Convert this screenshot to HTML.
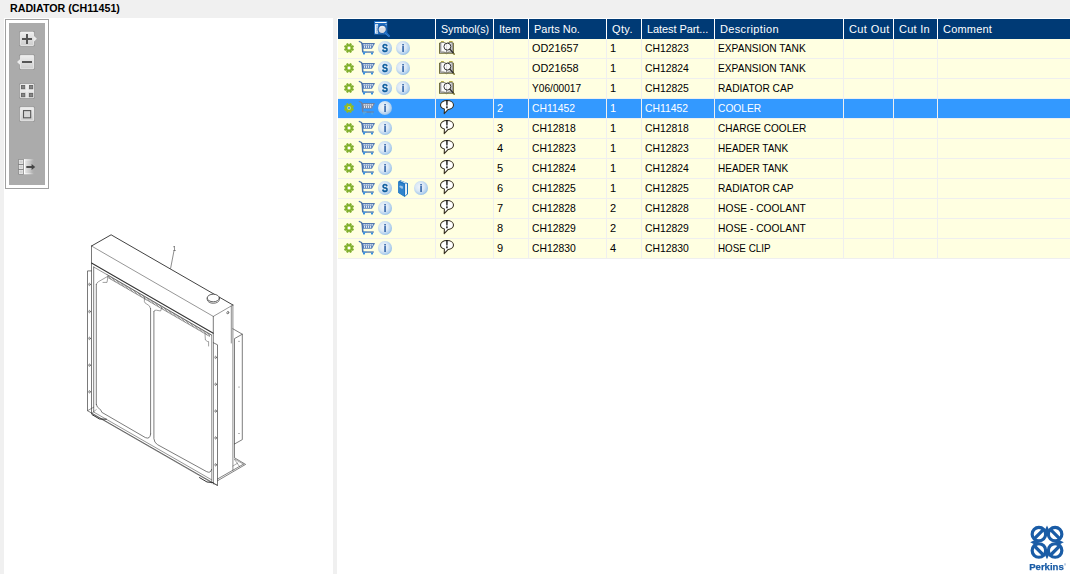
<!DOCTYPE html>
<html lang="en">
<head>
<meta charset="utf-8">
<title>RADIATOR (CH11451)</title>
<style>
*{box-sizing:border-box;margin:0;padding:0}
html,body{width:1070px;height:574px;overflow:hidden;background:#f0f0f0;font-family:"Liberation Sans",sans-serif;font-size:11px;color:#000}
#title{position:absolute;left:10.4px;top:0;height:16px;line-height:16px;font-weight:bold;font-size:11px;white-space:nowrap;transform:scaleX(.97);transform-origin:0 0}
#left{position:absolute;left:4px;top:18px;width:329px;height:556px;background:#fff;overflow:hidden}
#right{position:absolute;left:337px;top:18px;width:733px;height:556px;background:#fff;overflow:hidden}
#tools{position:absolute;left:1px;top:1px;width:44px;height:170px;border:1px solid #a0a0a0;padding:3px;background:#fff}
#tools .in{width:100%;height:100%;background:#ababab;position:relative}
#tools svg{position:absolute;display:block}
#draw{position:absolute;left:0;top:0}
table{position:absolute;left:1px;top:1px;width:732px;border-collapse:separate;border-spacing:0;table-layout:fixed}
th,td{height:20px;padding:0;white-space:nowrap;overflow:hidden;text-align:left;font-weight:normal;font-size:11px;vertical-align:top}
th{background:#003a75;color:#fff;border-right:1px solid #fff;line-height:19px;padding:1px 0 0 5px;position:relative}
th:last-child,td:last-child{border-right:0}
td{background:#ffffe1;border-right:1px solid #efefef;border-bottom:1px solid #efefef;line-height:18px;padding-left:3px}
td.c0{padding-left:0}
tr.sel td{background:#3399ff;color:#fff}
.t{display:inline-block;transform-origin:0 50%}
.ic{position:relative;height:19px}
.ic svg{position:absolute;top:1px;display:block;overflow:visible;will-change:transform}
#logo{position:absolute;left:1029px;top:524px}
</style>
</head>
<body>
<div id="title">RADIATOR (CH11451)</div>
<div id="left">
<svg id="draw" style="will-change:transform" width="329" height="556" viewBox="4 18 329 556" fill="none" stroke="#404040" stroke-width="0.68" stroke-linecap="round" stroke-linejoin="round">
<!-- top tank -->
<path d="M91.5 246 L111.1 234.8 L232.9 305" stroke="#383838" stroke-width="0.95"/>
<path d="M91.5 246 L213.3 316.4 L232.9 305" stroke-width="0.55"/>
<path d="M91.5 246 V413.4" stroke="#404040" stroke-width="0.7"/>
<path d="M91.5 263 L213.3 333.3" stroke="#343434" stroke-width="1.05"/>
<path d="M93.7 267 L211.6 335.1" stroke-width="0.55"/>
<path d="M213.3 316.4 V484" stroke-width="0.7"/>
<path d="M232.9 305 V470.2 M231.3 306 V343" stroke-width="0.6"/>
<!-- cap -->
<path d="M207.2 298 V299.4 A6.1 3.9 0 0 0 219.4 299.4 V298" stroke="#3a3a3a" stroke-width="0.7"/>
<ellipse cx="213.3" cy="298" rx="6.1" ry="3.8" fill="#fff" stroke="#3a3a3a" stroke-width="0.8"/>
<ellipse cx="227.8" cy="312.6" rx="0.9" ry="1.3" stroke-width="0.6" transform="rotate(25 227.8 312.6)"/>
<!-- leader -->
<path d="M173.9 251.2 L170.6 268.4" stroke-width="0.6"/>
<!-- hatch band under tank -->
<path d="M108 276.6 L210.4 335.7" stroke="#606060" stroke-width="2" stroke-dasharray="0.55 0.95" stroke-linecap="butt"/>
<path d="M107 274.6 L211 334.7 M108.6 278 L209.6 336.4" stroke-width="0.45"/>
<!-- left flange -->
<path d="M91.5 270.9 H87.5 V410.7 L217.5 485.4" stroke-width="0.7"/>
<path d="M93.7 267 V412 M96.3 284.5 V404.4"/>
<path d="M96.3 284.5 Q96.5 282.6 98.6 281.6 L108 276.2 L107 282.4 L103 282.4" stroke-width="0.5"/>
<path d="M96.3 404.4 Q96.8 407.4 99.4 408.8 Q101.4 410 101.8 412.3 L145.4 437.6 Q150.2 439.6 150.6 434"/>
<g stroke-width="0.55"><ellipse cx="89.5" cy="284.4" rx="0.8" ry="1.2"/><ellipse cx="89.5" cy="311.6" rx="0.8" ry="1.2"/><ellipse cx="89.5" cy="338.4" rx="0.8" ry="1.2"/><ellipse cx="89.5" cy="365.2" rx="0.8" ry="1.2"/><ellipse cx="89.5" cy="391.8" rx="0.8" ry="1.2"/></g>
<!-- bottom rail -->
<path d="M91.5 413.4 L211.6 482.6 M94 412.2 L211.6 479.8 M87.5 410.7 L93.7 407.2" stroke-width="0.55"/>
<path d="M91.5 413.4 L96.3 409.6" stroke-width="0.45"/>
<path d="M92 414.6 L99.5 419 L106.4 419.2" stroke="#333" stroke-width="1"/>
<path d="M199.5 477.6 L207 482 L213 482.6" stroke="#333" stroke-width="1"/>
<!-- centre divider -->
<path d="M150.6 308.6 V434 M153.9 311.6 V438.6 Q154.2 442.8 157.6 444.7 L206.4 471.5 Q210.8 473.8 211.6 469.4"/>
<path d="M144.4 297.6 V301.6 Q144.8 303.4 147 304.2 Q150.2 305.4 150.6 308.6 M153.9 311.6 Q154.2 309.6 156.4 310.2 L160.6 311 L161.8 307.6" stroke-width="0.5"/>
<!-- right inner/flange -->
<path d="M211.6 335.1 V483 M205 334 L205.4 340 Q207.6 342 208.6 341.6 L208.6 346" stroke-width="0.5"/>
<path d="M213.3 342.7 L217.5 344.8 V485.4 L213.3 483.4" stroke-width="0.7"/>
<g stroke-width="0.55"><ellipse cx="215.6" cy="357.4" rx="0.8" ry="1.2"/><ellipse cx="215.6" cy="384.3" rx="0.8" ry="1.2"/><ellipse cx="215.6" cy="411.1" rx="0.8" ry="1.2"/><ellipse cx="215.6" cy="437.9" rx="0.8" ry="1.2"/><ellipse cx="215.6" cy="464.8" rx="0.8" ry="1.2"/></g>
<!-- rear bracket -->
<path d="M232.9 328.8 L242.3 334.2 V439.6 L234.5 444 M242.3 334.2 L234.5 338.6 V443.6"/>
<g fill="#555" stroke="none"><circle cx="239" cy="341.3" r="0.55"/><circle cx="239" cy="387" r="0.55"/><circle cx="239" cy="433.5" r="0.55"/></g>
<!-- foot -->
<path d="M217.5 480.8 L245.6 464.4 L234.5 457.8 V444 M217.5 479 L243.4 464.2" stroke-width="0.65"/>
<path d="M243.4 464.2 L234.5 459 M234.5 459.4 L239.4 466.4 M232.9 466 L237.8 463" stroke-width="0.45"/>
<text x="172.6" y="250.6" font-family="Liberation Sans, sans-serif" font-size="6.8" fill="#555" stroke="none">1</text>
</svg>

<div id="tools"><div class="in"><svg width="36" height="162" viewBox="9 23 36 162" style="left:0;top:0">
<linearGradient id="bg1" x1="0" y1="0" x2="0" y2="1"><stop offset="0" stop-color="#efefef"/><stop offset="0.5" stop-color="#dedede"/><stop offset="1" stop-color="#cdcdcd"/></linearGradient>
<linearGradient id="bg2" x1="0" y1="0" x2="1" y2="0"><stop offset="0" stop-color="#ececec"/><stop offset="0.55" stop-color="#cfcfcf" stop-opacity=".8"/><stop offset="1" stop-color="#ababab" stop-opacity="0"/></linearGradient>
<linearGradient id="bg3" x1="0" y1="0" x2="1" y2="0"><stop offset="0" stop-color="#ffffff"/><stop offset="0.6" stop-color="#ffffff" stop-opacity=".5"/><stop offset="1" stop-color="#ffffff" stop-opacity="0"/></linearGradient>
<!-- plus -->
<rect x="19.35" y="31.05" width="15.3" height="15.3" rx="1.2" fill="#868686" opacity=".85"/>
<path d="M34 36 L36.9 38.8 L34 41.6 Z" fill="#ececec"/>
<rect x="20.3" y="32.00" width="13.4" height="13.4" rx="0.6" fill="url(#bg1)" stroke="#f6f6f6" stroke-width="0.8"/>
<path d="M22 39 H32 M27 34 V44" stroke="#555" stroke-width="2" fill="none"/>
<!-- minus -->
<rect x="19.35" y="54.45" width="15.3" height="15.3" rx="1.2" fill="#868686" opacity=".85"/>
<path d="M20 59.2 L17 62 L20 64.8 Z" fill="#ececec"/>
<rect x="20.3" y="55.40" width="13.4" height="13.4" rx="0.6" fill="url(#bg1)" stroke="#f6f6f6" stroke-width="0.8"/>
<path d="M22 62 H32" stroke="#555" stroke-width="2" fill="none"/>
<!-- grid -->
<rect x="19.35" y="83.35" width="15.3" height="15.3" rx="1.2" fill="#868686" opacity=".85"/>
<rect x="20.3" y="84.30" width="13.4" height="13.4" rx="0.6" fill="url(#bg1)" stroke="#f6f6f6" stroke-width="0.8"/>
<path d="M27 84.5 V97.5 M20.5 91 H33.5" stroke="#f3f3f3" stroke-width="1.6" opacity=".7"/>
<g fill="#858585" stroke="#666" stroke-width="0.9"><rect x="21.5" y="85.5" width="3.2" height="3.2"/><rect x="29.5" y="85.5" width="3.2" height="3.2"/><rect x="21.5" y="93.5" width="3.2" height="3.2"/><rect x="29.5" y="93.5" width="3.2" height="3.2"/></g>
<!-- square -->
<rect x="19.35" y="106.45" width="15.3" height="15.3" rx="1.2" fill="#868686" opacity=".85"/>
<rect x="20.3" y="107.40" width="13.4" height="13.4" rx="0.6" fill="url(#bg1)" stroke="#f6f6f6" stroke-width="0.8"/>
<rect x="23.5" y="110.6" width="7.2" height="7.2" fill="#d6d6d6" stroke="#555" stroke-width="1.1"/>
<!-- arrow panel -->
<rect x="24" y="159.6" width="11" height="14.4" fill="url(#bg2)"/>
<path d="M24.5 159.6 V174" stroke="#fff" stroke-width="1.2"/>
<rect x="24" y="159.3" width="10" height="1" fill="url(#bg3)"/>
<rect x="24" y="173.3" width="10" height="1" fill="url(#bg3)"/>
<rect x="18.3" y="159.4" width="5.3" height="14.9" fill="#6f6f6f"/>
<g fill="#d2d2d2" stroke="#f2f2f2" stroke-width="0.8"><rect x="19.2" y="160.2" width="3.6" height="3.4"/><rect x="19.2" y="165.2" width="3.6" height="3.4"/><rect x="19.2" y="170.2" width="3.6" height="3.4"/></g>
<path d="M26.3 167 H32.5" stroke="#444" stroke-width="1.9"/>
<path d="M31.6 163.9 L35.2 167 L31.6 170.1 Z" fill="#444"/>
</svg>
</div></div>
</div>
<div id="right">
<table>
<colgroup><col style="width:98px"><col style="width:58px"><col style="width:35px"><col style="width:78px"><col style="width:35px"><col style="width:73px"><col style="width:129px"><col style="width:50px"><col style="width:44px"><col style="width:132px"></colgroup>
<thead><tr><th><svg width="18" height="17" viewBox="0 0 18 17" style="position:absolute;left:36px;top:2px"><rect x="0" y="0" width="13.3" height="13.5" fill="#1f6cc0"/><rect x="1.1" y="1" width="11.4" height="1" fill="#fff"/><rect x="1.1" y="3.2" width="3" height="9.4" fill="#fff"/><rect x="2.2" y="4.6" width="1.6" height="0.9" fill="#1d64b4"/><rect x="2.2" y="6.6" width="1.6" height="0.9" fill="#1d64b4"/><rect x="2.2" y="8.6" width="1.6" height="0.9" fill="#1d64b4"/><rect x="2.2" y="10.6" width="1.6" height="0.9" fill="#1d64b4"/><path d="M11.2 3.2 L12.5 3.2 L12.5 4.6 Z" fill="#fff"/><circle cx="8.2" cy="8.3" r="4.15" fill="#d9dde4" stroke="#195aa6" stroke-width="1.1"/><path d="M6 6.6 Q8 5 10.4 6.4" stroke="#f4f6f9" stroke-width="1.2" fill="none"/><path d="M11.4 11.6 L15 15" stroke="#1f6fc4" stroke-width="2.2" stroke-linecap="round"/><path d="M11.6 12.6 L14.2 15.2" stroke="#8fb8e6" stroke-width="0.6" stroke-dasharray="0.8 0.8"/></svg></th><th><span class="t" style="transform:scaleX(.97)">Symbol(s)</span></th><th>Item</th><th>Parts No.</th><th style="letter-spacing:.37px">Qty.</th><th style="letter-spacing:-.09px">Latest Part...</th><th style="letter-spacing:.35px">Description</th><th style="letter-spacing:.39px">Cut Out</th><th style="letter-spacing:.25px">Cut In</th><th style="letter-spacing:.2px">Comment</th></tr></thead>
<tbody>
<tr><td class="c0"><div class="ic"><svg width="16" height="16" viewBox="0 0 16 16" style="left:3px"><path d="M11.46 8.52 L12.62 9.11 L12.05 10.48 L10.82 10.08 L10.08 10.82 L10.48 12.05 L9.11 12.62 L8.52 11.46 L7.48 11.46 L6.89 12.62 L5.52 12.05 L5.92 10.82 L5.18 10.08 L3.95 10.48 L3.38 9.11 L4.54 8.52 L4.54 7.48 L3.38 6.89 L3.95 5.52 L5.18 5.92 L5.92 5.18 L5.52 3.95 L6.89 3.38 L7.48 4.54 L8.52 4.54 L9.11 3.38 L10.48 3.95 L10.08 5.18 L10.82 5.92 L12.05 5.52 L12.62 6.89 L11.46 7.48Z" fill="#7fae2c" stroke="#7fae2c" stroke-width="0.7" stroke-linejoin="round"/><circle cx="8" cy="8" r="2.0" fill="#b6dc6a"/><circle cx="8" cy="8" r="1.25" fill="#ffffff"/></svg><svg width="16" height="16" viewBox="0 0 16 16" style="left:21px"><path d="M0.3 1.5 L2.4 2.5 L3.1 3.6" fill="none" stroke="#4a72ab" stroke-width="1.3" stroke-linecap="round"/><path d="M2.7 3.2 H15.9 L13 8.8 H3.3 Z" fill="#5b83bb"/><path d="M2.7 3.7 H15.6" stroke="#4a72ab" stroke-width="1"/><rect x="4.6" y="4.1" width="1.1" height="1.5" fill="#fff"/><rect x="6.6" y="4.1" width="1.1" height="1.5" fill="#fff"/><rect x="8.6" y="4.1" width="1.1" height="1.5" fill="#fff"/><rect x="10.6" y="4.1" width="1.1" height="1.5" fill="#fff"/><rect x="12.6" y="4.1" width="1.1" height="1.5" fill="#fff"/><rect x="5.0" y="6.2" width="1.1" height="1.5" fill="#fff"/><rect x="7.0" y="6.2" width="1.1" height="1.5" fill="#fff"/><rect x="9.0" y="6.2" width="1.1" height="1.5" fill="#fff"/><rect x="11.0" y="6.2" width="1.1" height="1.5" fill="#fff"/><path d="M3.2 3.4 L3.8 12.1" stroke="#4a72ab" stroke-width="1.5" fill="none"/><path d="M3.6 12.05 H14.8" stroke="#4a72ab" stroke-width="1.3" fill="none"/><path d="M3.8 12.2 H7.5" stroke="#3f97e6" stroke-width="0.9" fill="none"/><circle cx="5" cy="13.6" r="1.05" fill="#2a8be2"/><circle cx="13" cy="13.6" r="1.05" fill="#2a8be2"/></svg><svg width="16" height="16" viewBox="0 0 16 16" style="left:39px"><radialGradient id="g1" cx="0.42" cy="0.42" r="0.62"><stop offset="0" stop-color="#f0f5fa"/><stop offset="0.5" stop-color="#dbe8f5"/><stop offset="0.8" stop-color="#b4d1ee"/><stop offset="1" stop-color="#8ebce8"/></radialGradient><circle cx="8" cy="8" r="7" fill="url(#g1)"/><text opacity=".99" x="8" y="11.9" text-anchor="middle" font-family="Liberation Sans, sans-serif" font-weight="bold" font-size="10.2" fill="#0a5b9c" stroke="#0a5b9c" stroke-width="0.4" transform="translate(8 0) scale(.88 1) translate(-8 0)">S</text></svg><svg width="16" height="16" viewBox="0 0 16 16" style="left:57px"><radialGradient id="g2" cx="0.42" cy="0.42" r="0.62"><stop offset="0" stop-color="#f0f5fa"/><stop offset="0.5" stop-color="#dbe8f5"/><stop offset="0.8" stop-color="#b4d1ee"/><stop offset="1" stop-color="#8ebce8"/></radialGradient><circle cx="8" cy="8" r="7" fill="url(#g2)"/><text opacity=".99" x="8.05" y="12.25" text-anchor="middle" font-family="Liberation Sans, sans-serif" font-weight="bold" font-size="11.4" fill="#3566a8" stroke="#3566a8" stroke-width="0.1">i</text></svg></div></td><td class="c0"><div class="ic"><svg width="18" height="16" viewBox="0 0 18 16" style="left:2px;top:1px"><path d="M3 2 L3 1.1 L5.8 1.1 L5.8 2 Z M11.2 2 L11.2 1.1 L14.6 1.1 L14.6 2 Z" fill="#b3ab46"/><path d="M1 3 L2.8 2.2 L5.6 2 L8.5 3.2 L11.4 2 L14.2 2.2 L15.9 3 L15.9 13.7 L9.6 13.7 L8.5 14.2 L7.4 13.7 L1 13.7 Z" fill="#6c6936"/><path d="M1.9 3.6 L1.9 13 L7.6 13 L8.5 13.5 L9.4 13 L15 13 L15 3.6 L13.8 3 L13.8 11.8 L8.5 12.8 L3.2 11.8 L3.2 3 Z" fill="#a9a9a9"/><path d="M3 2.5 Q6 2 8.5 3.6 L8.5 12.7 Q6 11.4 3 12 Z" fill="#fbfbfb" stroke="#6a6a6a" stroke-width="0.5"/><path d="M14 2.5 Q11 2 8.5 3.6 L8.5 12.7 Q11 11.4 14 12 Z" fill="#e4e4e4" stroke="#6a6a6a" stroke-width="0.5"/><circle cx="9.4" cy="6.6" r="3.45" fill="#ffffff" fill-opacity="0.7" stroke="#2e2e2e" stroke-width="0.95"/><path d="M11.9 9.2 L16 13.9" stroke="#262626" stroke-width="1.25" stroke-linecap="round"/><path d="M15.6 13.6 L16.3 14.5" stroke="#8c8430" stroke-width="1.1" stroke-linecap="round"/></svg></div></td><td></td><td><span class="t" style="transform:scaleX(0.99)">OD21657</span></td><td>1</td><td><span class="t" style="transform:scaleX(0.942)">CH12823</span></td><td><span class="t" style="transform:scaleX(0.926)">EXPANSION TANK</span></td><td></td><td></td><td></td></tr>
<tr><td class="c0"><div class="ic"><svg width="16" height="16" viewBox="0 0 16 16" style="left:3px"><path d="M11.46 8.52 L12.62 9.11 L12.05 10.48 L10.82 10.08 L10.08 10.82 L10.48 12.05 L9.11 12.62 L8.52 11.46 L7.48 11.46 L6.89 12.62 L5.52 12.05 L5.92 10.82 L5.18 10.08 L3.95 10.48 L3.38 9.11 L4.54 8.52 L4.54 7.48 L3.38 6.89 L3.95 5.52 L5.18 5.92 L5.92 5.18 L5.52 3.95 L6.89 3.38 L7.48 4.54 L8.52 4.54 L9.11 3.38 L10.48 3.95 L10.08 5.18 L10.82 5.92 L12.05 5.52 L12.62 6.89 L11.46 7.48Z" fill="#7fae2c" stroke="#7fae2c" stroke-width="0.7" stroke-linejoin="round"/><circle cx="8" cy="8" r="2.0" fill="#b6dc6a"/><circle cx="8" cy="8" r="1.25" fill="#ffffff"/></svg><svg width="16" height="16" viewBox="0 0 16 16" style="left:21px"><path d="M0.3 1.5 L2.4 2.5 L3.1 3.6" fill="none" stroke="#4a72ab" stroke-width="1.3" stroke-linecap="round"/><path d="M2.7 3.2 H15.9 L13 8.8 H3.3 Z" fill="#5b83bb"/><path d="M2.7 3.7 H15.6" stroke="#4a72ab" stroke-width="1"/><rect x="4.6" y="4.1" width="1.1" height="1.5" fill="#fff"/><rect x="6.6" y="4.1" width="1.1" height="1.5" fill="#fff"/><rect x="8.6" y="4.1" width="1.1" height="1.5" fill="#fff"/><rect x="10.6" y="4.1" width="1.1" height="1.5" fill="#fff"/><rect x="12.6" y="4.1" width="1.1" height="1.5" fill="#fff"/><rect x="5.0" y="6.2" width="1.1" height="1.5" fill="#fff"/><rect x="7.0" y="6.2" width="1.1" height="1.5" fill="#fff"/><rect x="9.0" y="6.2" width="1.1" height="1.5" fill="#fff"/><rect x="11.0" y="6.2" width="1.1" height="1.5" fill="#fff"/><path d="M3.2 3.4 L3.8 12.1" stroke="#4a72ab" stroke-width="1.5" fill="none"/><path d="M3.6 12.05 H14.8" stroke="#4a72ab" stroke-width="1.3" fill="none"/><path d="M3.8 12.2 H7.5" stroke="#3f97e6" stroke-width="0.9" fill="none"/><circle cx="5" cy="13.6" r="1.05" fill="#2a8be2"/><circle cx="13" cy="13.6" r="1.05" fill="#2a8be2"/></svg><svg width="16" height="16" viewBox="0 0 16 16" style="left:39px"><radialGradient id="g3" cx="0.42" cy="0.42" r="0.62"><stop offset="0" stop-color="#f0f5fa"/><stop offset="0.5" stop-color="#dbe8f5"/><stop offset="0.8" stop-color="#b4d1ee"/><stop offset="1" stop-color="#8ebce8"/></radialGradient><circle cx="8" cy="8" r="7" fill="url(#g3)"/><text opacity=".99" x="8" y="11.9" text-anchor="middle" font-family="Liberation Sans, sans-serif" font-weight="bold" font-size="10.2" fill="#0a5b9c" stroke="#0a5b9c" stroke-width="0.4" transform="translate(8 0) scale(.88 1) translate(-8 0)">S</text></svg><svg width="16" height="16" viewBox="0 0 16 16" style="left:57px"><radialGradient id="g4" cx="0.42" cy="0.42" r="0.62"><stop offset="0" stop-color="#f0f5fa"/><stop offset="0.5" stop-color="#dbe8f5"/><stop offset="0.8" stop-color="#b4d1ee"/><stop offset="1" stop-color="#8ebce8"/></radialGradient><circle cx="8" cy="8" r="7" fill="url(#g4)"/><text opacity=".99" x="8.05" y="12.25" text-anchor="middle" font-family="Liberation Sans, sans-serif" font-weight="bold" font-size="11.4" fill="#3566a8" stroke="#3566a8" stroke-width="0.1">i</text></svg></div></td><td class="c0"><div class="ic"><svg width="18" height="16" viewBox="0 0 18 16" style="left:2px;top:1px"><path d="M3 2 L3 1.1 L5.8 1.1 L5.8 2 Z M11.2 2 L11.2 1.1 L14.6 1.1 L14.6 2 Z" fill="#b3ab46"/><path d="M1 3 L2.8 2.2 L5.6 2 L8.5 3.2 L11.4 2 L14.2 2.2 L15.9 3 L15.9 13.7 L9.6 13.7 L8.5 14.2 L7.4 13.7 L1 13.7 Z" fill="#6c6936"/><path d="M1.9 3.6 L1.9 13 L7.6 13 L8.5 13.5 L9.4 13 L15 13 L15 3.6 L13.8 3 L13.8 11.8 L8.5 12.8 L3.2 11.8 L3.2 3 Z" fill="#a9a9a9"/><path d="M3 2.5 Q6 2 8.5 3.6 L8.5 12.7 Q6 11.4 3 12 Z" fill="#fbfbfb" stroke="#6a6a6a" stroke-width="0.5"/><path d="M14 2.5 Q11 2 8.5 3.6 L8.5 12.7 Q11 11.4 14 12 Z" fill="#e4e4e4" stroke="#6a6a6a" stroke-width="0.5"/><circle cx="9.4" cy="6.6" r="3.45" fill="#ffffff" fill-opacity="0.7" stroke="#2e2e2e" stroke-width="0.95"/><path d="M11.9 9.2 L16 13.9" stroke="#262626" stroke-width="1.25" stroke-linecap="round"/><path d="M15.6 13.6 L16.3 14.5" stroke="#8c8430" stroke-width="1.1" stroke-linecap="round"/></svg></div></td><td></td><td><span class="t" style="transform:scaleX(0.99)">OD21658</span></td><td>1</td><td><span class="t" style="transform:scaleX(0.942)">CH12824</span></td><td><span class="t" style="transform:scaleX(0.926)">EXPANSION TANK</span></td><td></td><td></td><td></td></tr>
<tr><td class="c0"><div class="ic"><svg width="16" height="16" viewBox="0 0 16 16" style="left:3px"><path d="M11.46 8.52 L12.62 9.11 L12.05 10.48 L10.82 10.08 L10.08 10.82 L10.48 12.05 L9.11 12.62 L8.52 11.46 L7.48 11.46 L6.89 12.62 L5.52 12.05 L5.92 10.82 L5.18 10.08 L3.95 10.48 L3.38 9.11 L4.54 8.52 L4.54 7.48 L3.38 6.89 L3.95 5.52 L5.18 5.92 L5.92 5.18 L5.52 3.95 L6.89 3.38 L7.48 4.54 L8.52 4.54 L9.11 3.38 L10.48 3.95 L10.08 5.18 L10.82 5.92 L12.05 5.52 L12.62 6.89 L11.46 7.48Z" fill="#7fae2c" stroke="#7fae2c" stroke-width="0.7" stroke-linejoin="round"/><circle cx="8" cy="8" r="2.0" fill="#b6dc6a"/><circle cx="8" cy="8" r="1.25" fill="#ffffff"/></svg><svg width="16" height="16" viewBox="0 0 16 16" style="left:21px"><path d="M0.3 1.5 L2.4 2.5 L3.1 3.6" fill="none" stroke="#4a72ab" stroke-width="1.3" stroke-linecap="round"/><path d="M2.7 3.2 H15.9 L13 8.8 H3.3 Z" fill="#5b83bb"/><path d="M2.7 3.7 H15.6" stroke="#4a72ab" stroke-width="1"/><rect x="4.6" y="4.1" width="1.1" height="1.5" fill="#fff"/><rect x="6.6" y="4.1" width="1.1" height="1.5" fill="#fff"/><rect x="8.6" y="4.1" width="1.1" height="1.5" fill="#fff"/><rect x="10.6" y="4.1" width="1.1" height="1.5" fill="#fff"/><rect x="12.6" y="4.1" width="1.1" height="1.5" fill="#fff"/><rect x="5.0" y="6.2" width="1.1" height="1.5" fill="#fff"/><rect x="7.0" y="6.2" width="1.1" height="1.5" fill="#fff"/><rect x="9.0" y="6.2" width="1.1" height="1.5" fill="#fff"/><rect x="11.0" y="6.2" width="1.1" height="1.5" fill="#fff"/><path d="M3.2 3.4 L3.8 12.1" stroke="#4a72ab" stroke-width="1.5" fill="none"/><path d="M3.6 12.05 H14.8" stroke="#4a72ab" stroke-width="1.3" fill="none"/><path d="M3.8 12.2 H7.5" stroke="#3f97e6" stroke-width="0.9" fill="none"/><circle cx="5" cy="13.6" r="1.05" fill="#2a8be2"/><circle cx="13" cy="13.6" r="1.05" fill="#2a8be2"/></svg><svg width="16" height="16" viewBox="0 0 16 16" style="left:39px"><radialGradient id="g5" cx="0.42" cy="0.42" r="0.62"><stop offset="0" stop-color="#f0f5fa"/><stop offset="0.5" stop-color="#dbe8f5"/><stop offset="0.8" stop-color="#b4d1ee"/><stop offset="1" stop-color="#8ebce8"/></radialGradient><circle cx="8" cy="8" r="7" fill="url(#g5)"/><text opacity=".99" x="8" y="11.9" text-anchor="middle" font-family="Liberation Sans, sans-serif" font-weight="bold" font-size="10.2" fill="#0a5b9c" stroke="#0a5b9c" stroke-width="0.4" transform="translate(8 0) scale(.88 1) translate(-8 0)">S</text></svg><svg width="16" height="16" viewBox="0 0 16 16" style="left:57px"><radialGradient id="g6" cx="0.42" cy="0.42" r="0.62"><stop offset="0" stop-color="#f0f5fa"/><stop offset="0.5" stop-color="#dbe8f5"/><stop offset="0.8" stop-color="#b4d1ee"/><stop offset="1" stop-color="#8ebce8"/></radialGradient><circle cx="8" cy="8" r="7" fill="url(#g6)"/><text opacity=".99" x="8.05" y="12.25" text-anchor="middle" font-family="Liberation Sans, sans-serif" font-weight="bold" font-size="11.4" fill="#3566a8" stroke="#3566a8" stroke-width="0.1">i</text></svg></div></td><td class="c0"><div class="ic"><svg width="18" height="16" viewBox="0 0 18 16" style="left:2px;top:1px"><path d="M3 2 L3 1.1 L5.8 1.1 L5.8 2 Z M11.2 2 L11.2 1.1 L14.6 1.1 L14.6 2 Z" fill="#b3ab46"/><path d="M1 3 L2.8 2.2 L5.6 2 L8.5 3.2 L11.4 2 L14.2 2.2 L15.9 3 L15.9 13.7 L9.6 13.7 L8.5 14.2 L7.4 13.7 L1 13.7 Z" fill="#6c6936"/><path d="M1.9 3.6 L1.9 13 L7.6 13 L8.5 13.5 L9.4 13 L15 13 L15 3.6 L13.8 3 L13.8 11.8 L8.5 12.8 L3.2 11.8 L3.2 3 Z" fill="#a9a9a9"/><path d="M3 2.5 Q6 2 8.5 3.6 L8.5 12.7 Q6 11.4 3 12 Z" fill="#fbfbfb" stroke="#6a6a6a" stroke-width="0.5"/><path d="M14 2.5 Q11 2 8.5 3.6 L8.5 12.7 Q11 11.4 14 12 Z" fill="#e4e4e4" stroke="#6a6a6a" stroke-width="0.5"/><circle cx="9.4" cy="6.6" r="3.45" fill="#ffffff" fill-opacity="0.7" stroke="#2e2e2e" stroke-width="0.95"/><path d="M11.9 9.2 L16 13.9" stroke="#262626" stroke-width="1.25" stroke-linecap="round"/><path d="M15.6 13.6 L16.3 14.5" stroke="#8c8430" stroke-width="1.1" stroke-linecap="round"/></svg></div></td><td></td><td><span class="t" style="transform:scaleX(0.923)">Y06/00017</span></td><td>1</td><td><span class="t" style="transform:scaleX(0.942)">CH12825</span></td><td><span class="t" style="transform:scaleX(0.927)">RADIATOR CAP</span></td><td></td><td></td><td></td></tr>
<tr class="sel"><td class="c0"><div class="ic"><svg width="16" height="16" viewBox="0 0 16 16" style="left:3px"><path d="M11.46 8.52 L12.62 9.11 L12.05 10.48 L10.82 10.08 L10.08 10.82 L10.48 12.05 L9.11 12.62 L8.52 11.46 L7.48 11.46 L6.89 12.62 L5.52 12.05 L5.92 10.82 L5.18 10.08 L3.95 10.48 L3.38 9.11 L4.54 8.52 L4.54 7.48 L3.38 6.89 L3.95 5.52 L5.18 5.92 L5.92 5.18 L5.52 3.95 L6.89 3.38 L7.48 4.54 L8.52 4.54 L9.11 3.38 L10.48 3.95 L10.08 5.18 L10.82 5.92 L12.05 5.52 L12.62 6.89 L11.46 7.48Z" fill="#94bb1f" stroke="#94bb1f" stroke-width="0.7" stroke-linejoin="round"/><circle cx="8" cy="8" r="1.9" fill="#cfe88f"/><circle cx="8" cy="8" r="1.1" fill="#3399ff"/></svg><svg width="16" height="16" viewBox="0 0 16 16" style="left:21px"><path d="M0.3 1.5 L2.4 2.5 L3.1 3.6" fill="none" stroke="#71819d" stroke-width="1.3" stroke-linecap="round"/><path d="M2.7 3.2 H15.9 L13 8.8 H3.3 Z" fill="#7a8aa6"/><path d="M2.7 3.7 H15.6" stroke="#71819d" stroke-width="1"/><rect x="4.6" y="4.1" width="1.1" height="1.5" fill="#fff"/><rect x="6.6" y="4.1" width="1.1" height="1.5" fill="#fff"/><rect x="8.6" y="4.1" width="1.1" height="1.5" fill="#fff"/><rect x="10.6" y="4.1" width="1.1" height="1.5" fill="#fff"/><rect x="12.6" y="4.1" width="1.1" height="1.5" fill="#fff"/><rect x="5.0" y="6.2" width="1.1" height="1.5" fill="#fff"/><rect x="7.0" y="6.2" width="1.1" height="1.5" fill="#fff"/><rect x="9.0" y="6.2" width="1.1" height="1.5" fill="#fff"/><rect x="11.0" y="6.2" width="1.1" height="1.5" fill="#fff"/><path d="M3.2 3.4 L3.8 12.1" stroke="#71819d" stroke-width="1.5" fill="none"/><path d="M3.6 12.05 H14.8" stroke="#71819d" stroke-width="1.3" fill="none"/><path d="M3.8 12.2 H7.5" stroke="#5fb4ee" stroke-width="0.9" fill="none"/><circle cx="5" cy="13.6" r="1.05" fill="#4aa6e8"/><circle cx="13" cy="13.6" r="1.05" fill="#4aa6e8"/></svg><svg width="16" height="16" viewBox="0 0 16 16" style="left:39px"><radialGradient id="g7" cx="0.42" cy="0.42" r="0.62"><stop offset="0" stop-color="#f0f5fa"/><stop offset="0.5" stop-color="#dbe8f5"/><stop offset="0.8" stop-color="#b4d1ee"/><stop offset="1" stop-color="#8ebce8"/></radialGradient><circle cx="8" cy="8" r="7" fill="url(#g7)"/><text opacity=".99" x="8.05" y="12.25" text-anchor="middle" font-family="Liberation Sans, sans-serif" font-weight="bold" font-size="11.4" fill="#3566a8" stroke="#3566a8" stroke-width="0.1">i</text></svg></div></td><td class="c0"><div class="ic"><svg width="18" height="16" viewBox="0 0 18 16" style="left:3px;top:0"><path d="M8 1.5 C11.8 1.5 14.5 3.5 14.5 6 C14.5 8.6 11.6 10.2 9.2 10.4 L5.2 14.6 L5.4 10 C3 9.4 1.5 7.8 1.5 6 C1.5 3.5 4.2 1.5 8 1.5 Z" fill="#fff" stroke="#332c1c" stroke-width="1.05" stroke-linejoin="round"/><text opacity=".99" x="8" y="9.2" text-anchor="middle" font-family="Liberation Sans, sans-serif" font-weight="bold" font-size="10" fill="#1a1a1a" stroke="#1a1a1a" stroke-width="0.25">!</text></svg></div></td><td>2</td><td><span class="t" style="transform:scaleX(0.942)">CH11452</span></td><td>1</td><td><span class="t" style="transform:scaleX(0.942)">CH11452</span></td><td><span class="t" style="transform:scaleX(0.929)">COOLER</span></td><td></td><td></td><td></td></tr>
<tr><td class="c0"><div class="ic"><svg width="16" height="16" viewBox="0 0 16 16" style="left:3px"><path d="M11.46 8.52 L12.62 9.11 L12.05 10.48 L10.82 10.08 L10.08 10.82 L10.48 12.05 L9.11 12.62 L8.52 11.46 L7.48 11.46 L6.89 12.62 L5.52 12.05 L5.92 10.82 L5.18 10.08 L3.95 10.48 L3.38 9.11 L4.54 8.52 L4.54 7.48 L3.38 6.89 L3.95 5.52 L5.18 5.92 L5.92 5.18 L5.52 3.95 L6.89 3.38 L7.48 4.54 L8.52 4.54 L9.11 3.38 L10.48 3.95 L10.08 5.18 L10.82 5.92 L12.05 5.52 L12.62 6.89 L11.46 7.48Z" fill="#7fae2c" stroke="#7fae2c" stroke-width="0.7" stroke-linejoin="round"/><circle cx="8" cy="8" r="2.0" fill="#b6dc6a"/><circle cx="8" cy="8" r="1.25" fill="#ffffff"/></svg><svg width="16" height="16" viewBox="0 0 16 16" style="left:21px"><path d="M0.3 1.5 L2.4 2.5 L3.1 3.6" fill="none" stroke="#4a72ab" stroke-width="1.3" stroke-linecap="round"/><path d="M2.7 3.2 H15.9 L13 8.8 H3.3 Z" fill="#5b83bb"/><path d="M2.7 3.7 H15.6" stroke="#4a72ab" stroke-width="1"/><rect x="4.6" y="4.1" width="1.1" height="1.5" fill="#fff"/><rect x="6.6" y="4.1" width="1.1" height="1.5" fill="#fff"/><rect x="8.6" y="4.1" width="1.1" height="1.5" fill="#fff"/><rect x="10.6" y="4.1" width="1.1" height="1.5" fill="#fff"/><rect x="12.6" y="4.1" width="1.1" height="1.5" fill="#fff"/><rect x="5.0" y="6.2" width="1.1" height="1.5" fill="#fff"/><rect x="7.0" y="6.2" width="1.1" height="1.5" fill="#fff"/><rect x="9.0" y="6.2" width="1.1" height="1.5" fill="#fff"/><rect x="11.0" y="6.2" width="1.1" height="1.5" fill="#fff"/><path d="M3.2 3.4 L3.8 12.1" stroke="#4a72ab" stroke-width="1.5" fill="none"/><path d="M3.6 12.05 H14.8" stroke="#4a72ab" stroke-width="1.3" fill="none"/><path d="M3.8 12.2 H7.5" stroke="#3f97e6" stroke-width="0.9" fill="none"/><circle cx="5" cy="13.6" r="1.05" fill="#2a8be2"/><circle cx="13" cy="13.6" r="1.05" fill="#2a8be2"/></svg><svg width="16" height="16" viewBox="0 0 16 16" style="left:39px"><radialGradient id="g8" cx="0.42" cy="0.42" r="0.62"><stop offset="0" stop-color="#f0f5fa"/><stop offset="0.5" stop-color="#dbe8f5"/><stop offset="0.8" stop-color="#b4d1ee"/><stop offset="1" stop-color="#8ebce8"/></radialGradient><circle cx="8" cy="8" r="7" fill="url(#g8)"/><text opacity=".99" x="8.05" y="12.25" text-anchor="middle" font-family="Liberation Sans, sans-serif" font-weight="bold" font-size="11.4" fill="#3566a8" stroke="#3566a8" stroke-width="0.1">i</text></svg></div></td><td class="c0"><div class="ic"><svg width="18" height="16" viewBox="0 0 18 16" style="left:3px;top:0"><path d="M8 1.5 C11.8 1.5 14.5 3.5 14.5 6 C14.5 8.6 11.6 10.2 9.2 10.4 L5.2 14.6 L5.4 10 C3 9.4 1.5 7.8 1.5 6 C1.5 3.5 4.2 1.5 8 1.5 Z" fill="#fff" stroke="#332c1c" stroke-width="1.05" stroke-linejoin="round"/><text opacity=".99" x="8" y="9.2" text-anchor="middle" font-family="Liberation Sans, sans-serif" font-weight="bold" font-size="10" fill="#1a1a1a" stroke="#1a1a1a" stroke-width="0.25">!</text></svg></div></td><td>3</td><td><span class="t" style="transform:scaleX(0.942)">CH12818</span></td><td>1</td><td><span class="t" style="transform:scaleX(0.942)">CH12818</span></td><td><span class="t" style="transform:scaleX(0.913)">CHARGE COOLER</span></td><td></td><td></td><td></td></tr>
<tr><td class="c0"><div class="ic"><svg width="16" height="16" viewBox="0 0 16 16" style="left:3px"><path d="M11.46 8.52 L12.62 9.11 L12.05 10.48 L10.82 10.08 L10.08 10.82 L10.48 12.05 L9.11 12.62 L8.52 11.46 L7.48 11.46 L6.89 12.62 L5.52 12.05 L5.92 10.82 L5.18 10.08 L3.95 10.48 L3.38 9.11 L4.54 8.52 L4.54 7.48 L3.38 6.89 L3.95 5.52 L5.18 5.92 L5.92 5.18 L5.52 3.95 L6.89 3.38 L7.48 4.54 L8.52 4.54 L9.11 3.38 L10.48 3.95 L10.08 5.18 L10.82 5.92 L12.05 5.52 L12.62 6.89 L11.46 7.48Z" fill="#7fae2c" stroke="#7fae2c" stroke-width="0.7" stroke-linejoin="round"/><circle cx="8" cy="8" r="2.0" fill="#b6dc6a"/><circle cx="8" cy="8" r="1.25" fill="#ffffff"/></svg><svg width="16" height="16" viewBox="0 0 16 16" style="left:21px"><path d="M0.3 1.5 L2.4 2.5 L3.1 3.6" fill="none" stroke="#4a72ab" stroke-width="1.3" stroke-linecap="round"/><path d="M2.7 3.2 H15.9 L13 8.8 H3.3 Z" fill="#5b83bb"/><path d="M2.7 3.7 H15.6" stroke="#4a72ab" stroke-width="1"/><rect x="4.6" y="4.1" width="1.1" height="1.5" fill="#fff"/><rect x="6.6" y="4.1" width="1.1" height="1.5" fill="#fff"/><rect x="8.6" y="4.1" width="1.1" height="1.5" fill="#fff"/><rect x="10.6" y="4.1" width="1.1" height="1.5" fill="#fff"/><rect x="12.6" y="4.1" width="1.1" height="1.5" fill="#fff"/><rect x="5.0" y="6.2" width="1.1" height="1.5" fill="#fff"/><rect x="7.0" y="6.2" width="1.1" height="1.5" fill="#fff"/><rect x="9.0" y="6.2" width="1.1" height="1.5" fill="#fff"/><rect x="11.0" y="6.2" width="1.1" height="1.5" fill="#fff"/><path d="M3.2 3.4 L3.8 12.1" stroke="#4a72ab" stroke-width="1.5" fill="none"/><path d="M3.6 12.05 H14.8" stroke="#4a72ab" stroke-width="1.3" fill="none"/><path d="M3.8 12.2 H7.5" stroke="#3f97e6" stroke-width="0.9" fill="none"/><circle cx="5" cy="13.6" r="1.05" fill="#2a8be2"/><circle cx="13" cy="13.6" r="1.05" fill="#2a8be2"/></svg><svg width="16" height="16" viewBox="0 0 16 16" style="left:39px"><radialGradient id="g9" cx="0.42" cy="0.42" r="0.62"><stop offset="0" stop-color="#f0f5fa"/><stop offset="0.5" stop-color="#dbe8f5"/><stop offset="0.8" stop-color="#b4d1ee"/><stop offset="1" stop-color="#8ebce8"/></radialGradient><circle cx="8" cy="8" r="7" fill="url(#g9)"/><text opacity=".99" x="8.05" y="12.25" text-anchor="middle" font-family="Liberation Sans, sans-serif" font-weight="bold" font-size="11.4" fill="#3566a8" stroke="#3566a8" stroke-width="0.1">i</text></svg></div></td><td class="c0"><div class="ic"><svg width="18" height="16" viewBox="0 0 18 16" style="left:3px;top:0"><path d="M8 1.5 C11.8 1.5 14.5 3.5 14.5 6 C14.5 8.6 11.6 10.2 9.2 10.4 L5.2 14.6 L5.4 10 C3 9.4 1.5 7.8 1.5 6 C1.5 3.5 4.2 1.5 8 1.5 Z" fill="#fff" stroke="#332c1c" stroke-width="1.05" stroke-linejoin="round"/><text opacity=".99" x="8" y="9.2" text-anchor="middle" font-family="Liberation Sans, sans-serif" font-weight="bold" font-size="10" fill="#1a1a1a" stroke="#1a1a1a" stroke-width="0.25">!</text></svg></div></td><td>4</td><td><span class="t" style="transform:scaleX(0.942)">CH12823</span></td><td>1</td><td><span class="t" style="transform:scaleX(0.942)">CH12823</span></td><td><span class="t" style="transform:scaleX(0.91)">HEADER TANK</span></td><td></td><td></td><td></td></tr>
<tr><td class="c0"><div class="ic"><svg width="16" height="16" viewBox="0 0 16 16" style="left:3px"><path d="M11.46 8.52 L12.62 9.11 L12.05 10.48 L10.82 10.08 L10.08 10.82 L10.48 12.05 L9.11 12.62 L8.52 11.46 L7.48 11.46 L6.89 12.62 L5.52 12.05 L5.92 10.82 L5.18 10.08 L3.95 10.48 L3.38 9.11 L4.54 8.52 L4.54 7.48 L3.38 6.89 L3.95 5.52 L5.18 5.92 L5.92 5.18 L5.52 3.95 L6.89 3.38 L7.48 4.54 L8.52 4.54 L9.11 3.38 L10.48 3.95 L10.08 5.18 L10.82 5.92 L12.05 5.52 L12.62 6.89 L11.46 7.48Z" fill="#7fae2c" stroke="#7fae2c" stroke-width="0.7" stroke-linejoin="round"/><circle cx="8" cy="8" r="2.0" fill="#b6dc6a"/><circle cx="8" cy="8" r="1.25" fill="#ffffff"/></svg><svg width="16" height="16" viewBox="0 0 16 16" style="left:21px"><path d="M0.3 1.5 L2.4 2.5 L3.1 3.6" fill="none" stroke="#4a72ab" stroke-width="1.3" stroke-linecap="round"/><path d="M2.7 3.2 H15.9 L13 8.8 H3.3 Z" fill="#5b83bb"/><path d="M2.7 3.7 H15.6" stroke="#4a72ab" stroke-width="1"/><rect x="4.6" y="4.1" width="1.1" height="1.5" fill="#fff"/><rect x="6.6" y="4.1" width="1.1" height="1.5" fill="#fff"/><rect x="8.6" y="4.1" width="1.1" height="1.5" fill="#fff"/><rect x="10.6" y="4.1" width="1.1" height="1.5" fill="#fff"/><rect x="12.6" y="4.1" width="1.1" height="1.5" fill="#fff"/><rect x="5.0" y="6.2" width="1.1" height="1.5" fill="#fff"/><rect x="7.0" y="6.2" width="1.1" height="1.5" fill="#fff"/><rect x="9.0" y="6.2" width="1.1" height="1.5" fill="#fff"/><rect x="11.0" y="6.2" width="1.1" height="1.5" fill="#fff"/><path d="M3.2 3.4 L3.8 12.1" stroke="#4a72ab" stroke-width="1.5" fill="none"/><path d="M3.6 12.05 H14.8" stroke="#4a72ab" stroke-width="1.3" fill="none"/><path d="M3.8 12.2 H7.5" stroke="#3f97e6" stroke-width="0.9" fill="none"/><circle cx="5" cy="13.6" r="1.05" fill="#2a8be2"/><circle cx="13" cy="13.6" r="1.05" fill="#2a8be2"/></svg><svg width="16" height="16" viewBox="0 0 16 16" style="left:39px"><radialGradient id="g10" cx="0.42" cy="0.42" r="0.62"><stop offset="0" stop-color="#f0f5fa"/><stop offset="0.5" stop-color="#dbe8f5"/><stop offset="0.8" stop-color="#b4d1ee"/><stop offset="1" stop-color="#8ebce8"/></radialGradient><circle cx="8" cy="8" r="7" fill="url(#g10)"/><text opacity=".99" x="8.05" y="12.25" text-anchor="middle" font-family="Liberation Sans, sans-serif" font-weight="bold" font-size="11.4" fill="#3566a8" stroke="#3566a8" stroke-width="0.1">i</text></svg></div></td><td class="c0"><div class="ic"><svg width="18" height="16" viewBox="0 0 18 16" style="left:3px;top:0"><path d="M8 1.5 C11.8 1.5 14.5 3.5 14.5 6 C14.5 8.6 11.6 10.2 9.2 10.4 L5.2 14.6 L5.4 10 C3 9.4 1.5 7.8 1.5 6 C1.5 3.5 4.2 1.5 8 1.5 Z" fill="#fff" stroke="#332c1c" stroke-width="1.05" stroke-linejoin="round"/><text opacity=".99" x="8" y="9.2" text-anchor="middle" font-family="Liberation Sans, sans-serif" font-weight="bold" font-size="10" fill="#1a1a1a" stroke="#1a1a1a" stroke-width="0.25">!</text></svg></div></td><td>5</td><td><span class="t" style="transform:scaleX(0.942)">CH12824</span></td><td>1</td><td><span class="t" style="transform:scaleX(0.942)">CH12824</span></td><td><span class="t" style="transform:scaleX(0.91)">HEADER TANK</span></td><td></td><td></td><td></td></tr>
<tr><td class="c0"><div class="ic"><svg width="16" height="16" viewBox="0 0 16 16" style="left:3px"><path d="M11.46 8.52 L12.62 9.11 L12.05 10.48 L10.82 10.08 L10.08 10.82 L10.48 12.05 L9.11 12.62 L8.52 11.46 L7.48 11.46 L6.89 12.62 L5.52 12.05 L5.92 10.82 L5.18 10.08 L3.95 10.48 L3.38 9.11 L4.54 8.52 L4.54 7.48 L3.38 6.89 L3.95 5.52 L5.18 5.92 L5.92 5.18 L5.52 3.95 L6.89 3.38 L7.48 4.54 L8.52 4.54 L9.11 3.38 L10.48 3.95 L10.08 5.18 L10.82 5.92 L12.05 5.52 L12.62 6.89 L11.46 7.48Z" fill="#7fae2c" stroke="#7fae2c" stroke-width="0.7" stroke-linejoin="round"/><circle cx="8" cy="8" r="2.0" fill="#b6dc6a"/><circle cx="8" cy="8" r="1.25" fill="#ffffff"/></svg><svg width="16" height="16" viewBox="0 0 16 16" style="left:21px"><path d="M0.3 1.5 L2.4 2.5 L3.1 3.6" fill="none" stroke="#4a72ab" stroke-width="1.3" stroke-linecap="round"/><path d="M2.7 3.2 H15.9 L13 8.8 H3.3 Z" fill="#5b83bb"/><path d="M2.7 3.7 H15.6" stroke="#4a72ab" stroke-width="1"/><rect x="4.6" y="4.1" width="1.1" height="1.5" fill="#fff"/><rect x="6.6" y="4.1" width="1.1" height="1.5" fill="#fff"/><rect x="8.6" y="4.1" width="1.1" height="1.5" fill="#fff"/><rect x="10.6" y="4.1" width="1.1" height="1.5" fill="#fff"/><rect x="12.6" y="4.1" width="1.1" height="1.5" fill="#fff"/><rect x="5.0" y="6.2" width="1.1" height="1.5" fill="#fff"/><rect x="7.0" y="6.2" width="1.1" height="1.5" fill="#fff"/><rect x="9.0" y="6.2" width="1.1" height="1.5" fill="#fff"/><rect x="11.0" y="6.2" width="1.1" height="1.5" fill="#fff"/><path d="M3.2 3.4 L3.8 12.1" stroke="#4a72ab" stroke-width="1.5" fill="none"/><path d="M3.6 12.05 H14.8" stroke="#4a72ab" stroke-width="1.3" fill="none"/><path d="M3.8 12.2 H7.5" stroke="#3f97e6" stroke-width="0.9" fill="none"/><circle cx="5" cy="13.6" r="1.05" fill="#2a8be2"/><circle cx="13" cy="13.6" r="1.05" fill="#2a8be2"/></svg><svg width="16" height="16" viewBox="0 0 16 16" style="left:39px"><radialGradient id="g11" cx="0.42" cy="0.42" r="0.62"><stop offset="0" stop-color="#f0f5fa"/><stop offset="0.5" stop-color="#dbe8f5"/><stop offset="0.8" stop-color="#b4d1ee"/><stop offset="1" stop-color="#8ebce8"/></radialGradient><circle cx="8" cy="8" r="7" fill="url(#g11)"/><text opacity=".99" x="8" y="11.9" text-anchor="middle" font-family="Liberation Sans, sans-serif" font-weight="bold" font-size="10.2" fill="#0a5b9c" stroke="#0a5b9c" stroke-width="0.4" transform="translate(8 0) scale(.88 1) translate(-8 0)">S</text></svg><svg width="16" height="17" viewBox="0 0 16 17" style="left:57px"><path d="M3.2 1.6 L5.4 0.3 L13 3.2 L13 14 L9.6 16.9 L9 16.5 L3.2 12.8 Z" fill="#1c72bd"/><path d="M3.2 1.8 L9.2 4.4 L9.2 16.3 L3.2 12.8 Z" fill="#2f83cc"/><path d="M5.2 1.1 L6.4 0.9 L11.6 3 L10.4 3.4 Z" fill="#fff"/><path d="M10 4.3 L11.9 3.5 L11.9 14 L10 15.6 Z" fill="#fff"/><path d="M10 4.3 L10.9 3.9 L10.9 14.8 L10 15.6 Z" fill="#dfe9f5"/><path d="M4.3 6.2 Q5.2 4.8 6.3 6 Q7.4 5.4 8 7.2 Q8.2 9.2 7 8.6 Q5.8 8.8 5.2 7.6 Q4.2 7.4 4.3 6.2Z" fill="#9cc3e6"/></svg><svg width="16" height="16" viewBox="0 0 16 16" style="left:75px"><radialGradient id="g12" cx="0.42" cy="0.42" r="0.62"><stop offset="0" stop-color="#f0f5fa"/><stop offset="0.5" stop-color="#dbe8f5"/><stop offset="0.8" stop-color="#b4d1ee"/><stop offset="1" stop-color="#8ebce8"/></radialGradient><circle cx="8" cy="8" r="7" fill="url(#g12)"/><text opacity=".99" x="8.05" y="12.25" text-anchor="middle" font-family="Liberation Sans, sans-serif" font-weight="bold" font-size="11.4" fill="#3566a8" stroke="#3566a8" stroke-width="0.1">i</text></svg></div></td><td class="c0"><div class="ic"><svg width="18" height="16" viewBox="0 0 18 16" style="left:3px;top:0"><path d="M8 1.5 C11.8 1.5 14.5 3.5 14.5 6 C14.5 8.6 11.6 10.2 9.2 10.4 L5.2 14.6 L5.4 10 C3 9.4 1.5 7.8 1.5 6 C1.5 3.5 4.2 1.5 8 1.5 Z" fill="#fff" stroke="#332c1c" stroke-width="1.05" stroke-linejoin="round"/><text opacity=".99" x="8" y="9.2" text-anchor="middle" font-family="Liberation Sans, sans-serif" font-weight="bold" font-size="10" fill="#1a1a1a" stroke="#1a1a1a" stroke-width="0.25">!</text></svg></div></td><td>6</td><td><span class="t" style="transform:scaleX(0.942)">CH12825</span></td><td>1</td><td><span class="t" style="transform:scaleX(0.942)">CH12825</span></td><td><span class="t" style="transform:scaleX(0.927)">RADIATOR CAP</span></td><td></td><td></td><td></td></tr>
<tr><td class="c0"><div class="ic"><svg width="16" height="16" viewBox="0 0 16 16" style="left:3px"><path d="M11.46 8.52 L12.62 9.11 L12.05 10.48 L10.82 10.08 L10.08 10.82 L10.48 12.05 L9.11 12.62 L8.52 11.46 L7.48 11.46 L6.89 12.62 L5.52 12.05 L5.92 10.82 L5.18 10.08 L3.95 10.48 L3.38 9.11 L4.54 8.52 L4.54 7.48 L3.38 6.89 L3.95 5.52 L5.18 5.92 L5.92 5.18 L5.52 3.95 L6.89 3.38 L7.48 4.54 L8.52 4.54 L9.11 3.38 L10.48 3.95 L10.08 5.18 L10.82 5.92 L12.05 5.52 L12.62 6.89 L11.46 7.48Z" fill="#7fae2c" stroke="#7fae2c" stroke-width="0.7" stroke-linejoin="round"/><circle cx="8" cy="8" r="2.0" fill="#b6dc6a"/><circle cx="8" cy="8" r="1.25" fill="#ffffff"/></svg><svg width="16" height="16" viewBox="0 0 16 16" style="left:21px"><path d="M0.3 1.5 L2.4 2.5 L3.1 3.6" fill="none" stroke="#4a72ab" stroke-width="1.3" stroke-linecap="round"/><path d="M2.7 3.2 H15.9 L13 8.8 H3.3 Z" fill="#5b83bb"/><path d="M2.7 3.7 H15.6" stroke="#4a72ab" stroke-width="1"/><rect x="4.6" y="4.1" width="1.1" height="1.5" fill="#fff"/><rect x="6.6" y="4.1" width="1.1" height="1.5" fill="#fff"/><rect x="8.6" y="4.1" width="1.1" height="1.5" fill="#fff"/><rect x="10.6" y="4.1" width="1.1" height="1.5" fill="#fff"/><rect x="12.6" y="4.1" width="1.1" height="1.5" fill="#fff"/><rect x="5.0" y="6.2" width="1.1" height="1.5" fill="#fff"/><rect x="7.0" y="6.2" width="1.1" height="1.5" fill="#fff"/><rect x="9.0" y="6.2" width="1.1" height="1.5" fill="#fff"/><rect x="11.0" y="6.2" width="1.1" height="1.5" fill="#fff"/><path d="M3.2 3.4 L3.8 12.1" stroke="#4a72ab" stroke-width="1.5" fill="none"/><path d="M3.6 12.05 H14.8" stroke="#4a72ab" stroke-width="1.3" fill="none"/><path d="M3.8 12.2 H7.5" stroke="#3f97e6" stroke-width="0.9" fill="none"/><circle cx="5" cy="13.6" r="1.05" fill="#2a8be2"/><circle cx="13" cy="13.6" r="1.05" fill="#2a8be2"/></svg><svg width="16" height="16" viewBox="0 0 16 16" style="left:39px"><radialGradient id="g13" cx="0.42" cy="0.42" r="0.62"><stop offset="0" stop-color="#f0f5fa"/><stop offset="0.5" stop-color="#dbe8f5"/><stop offset="0.8" stop-color="#b4d1ee"/><stop offset="1" stop-color="#8ebce8"/></radialGradient><circle cx="8" cy="8" r="7" fill="url(#g13)"/><text opacity=".99" x="8.05" y="12.25" text-anchor="middle" font-family="Liberation Sans, sans-serif" font-weight="bold" font-size="11.4" fill="#3566a8" stroke="#3566a8" stroke-width="0.1">i</text></svg></div></td><td class="c0"><div class="ic"><svg width="18" height="16" viewBox="0 0 18 16" style="left:3px;top:0"><path d="M8 1.5 C11.8 1.5 14.5 3.5 14.5 6 C14.5 8.6 11.6 10.2 9.2 10.4 L5.2 14.6 L5.4 10 C3 9.4 1.5 7.8 1.5 6 C1.5 3.5 4.2 1.5 8 1.5 Z" fill="#fff" stroke="#332c1c" stroke-width="1.05" stroke-linejoin="round"/><text opacity=".99" x="8" y="9.2" text-anchor="middle" font-family="Liberation Sans, sans-serif" font-weight="bold" font-size="10" fill="#1a1a1a" stroke="#1a1a1a" stroke-width="0.25">!</text></svg></div></td><td>7</td><td><span class="t" style="transform:scaleX(0.942)">CH12828</span></td><td>2</td><td><span class="t" style="transform:scaleX(0.942)">CH12828</span></td><td><span class="t" style="transform:scaleX(0.933)">HOSE - COOLANT</span></td><td></td><td></td><td></td></tr>
<tr><td class="c0"><div class="ic"><svg width="16" height="16" viewBox="0 0 16 16" style="left:3px"><path d="M11.46 8.52 L12.62 9.11 L12.05 10.48 L10.82 10.08 L10.08 10.82 L10.48 12.05 L9.11 12.62 L8.52 11.46 L7.48 11.46 L6.89 12.62 L5.52 12.05 L5.92 10.82 L5.18 10.08 L3.95 10.48 L3.38 9.11 L4.54 8.52 L4.54 7.48 L3.38 6.89 L3.95 5.52 L5.18 5.92 L5.92 5.18 L5.52 3.95 L6.89 3.38 L7.48 4.54 L8.52 4.54 L9.11 3.38 L10.48 3.95 L10.08 5.18 L10.82 5.92 L12.05 5.52 L12.62 6.89 L11.46 7.48Z" fill="#7fae2c" stroke="#7fae2c" stroke-width="0.7" stroke-linejoin="round"/><circle cx="8" cy="8" r="2.0" fill="#b6dc6a"/><circle cx="8" cy="8" r="1.25" fill="#ffffff"/></svg><svg width="16" height="16" viewBox="0 0 16 16" style="left:21px"><path d="M0.3 1.5 L2.4 2.5 L3.1 3.6" fill="none" stroke="#4a72ab" stroke-width="1.3" stroke-linecap="round"/><path d="M2.7 3.2 H15.9 L13 8.8 H3.3 Z" fill="#5b83bb"/><path d="M2.7 3.7 H15.6" stroke="#4a72ab" stroke-width="1"/><rect x="4.6" y="4.1" width="1.1" height="1.5" fill="#fff"/><rect x="6.6" y="4.1" width="1.1" height="1.5" fill="#fff"/><rect x="8.6" y="4.1" width="1.1" height="1.5" fill="#fff"/><rect x="10.6" y="4.1" width="1.1" height="1.5" fill="#fff"/><rect x="12.6" y="4.1" width="1.1" height="1.5" fill="#fff"/><rect x="5.0" y="6.2" width="1.1" height="1.5" fill="#fff"/><rect x="7.0" y="6.2" width="1.1" height="1.5" fill="#fff"/><rect x="9.0" y="6.2" width="1.1" height="1.5" fill="#fff"/><rect x="11.0" y="6.2" width="1.1" height="1.5" fill="#fff"/><path d="M3.2 3.4 L3.8 12.1" stroke="#4a72ab" stroke-width="1.5" fill="none"/><path d="M3.6 12.05 H14.8" stroke="#4a72ab" stroke-width="1.3" fill="none"/><path d="M3.8 12.2 H7.5" stroke="#3f97e6" stroke-width="0.9" fill="none"/><circle cx="5" cy="13.6" r="1.05" fill="#2a8be2"/><circle cx="13" cy="13.6" r="1.05" fill="#2a8be2"/></svg><svg width="16" height="16" viewBox="0 0 16 16" style="left:39px"><radialGradient id="g14" cx="0.42" cy="0.42" r="0.62"><stop offset="0" stop-color="#f0f5fa"/><stop offset="0.5" stop-color="#dbe8f5"/><stop offset="0.8" stop-color="#b4d1ee"/><stop offset="1" stop-color="#8ebce8"/></radialGradient><circle cx="8" cy="8" r="7" fill="url(#g14)"/><text opacity=".99" x="8.05" y="12.25" text-anchor="middle" font-family="Liberation Sans, sans-serif" font-weight="bold" font-size="11.4" fill="#3566a8" stroke="#3566a8" stroke-width="0.1">i</text></svg></div></td><td class="c0"><div class="ic"><svg width="18" height="16" viewBox="0 0 18 16" style="left:3px;top:0"><path d="M8 1.5 C11.8 1.5 14.5 3.5 14.5 6 C14.5 8.6 11.6 10.2 9.2 10.4 L5.2 14.6 L5.4 10 C3 9.4 1.5 7.8 1.5 6 C1.5 3.5 4.2 1.5 8 1.5 Z" fill="#fff" stroke="#332c1c" stroke-width="1.05" stroke-linejoin="round"/><text opacity=".99" x="8" y="9.2" text-anchor="middle" font-family="Liberation Sans, sans-serif" font-weight="bold" font-size="10" fill="#1a1a1a" stroke="#1a1a1a" stroke-width="0.25">!</text></svg></div></td><td>8</td><td><span class="t" style="transform:scaleX(0.942)">CH12829</span></td><td>2</td><td><span class="t" style="transform:scaleX(0.942)">CH12829</span></td><td><span class="t" style="transform:scaleX(0.933)">HOSE - COOLANT</span></td><td></td><td></td><td></td></tr>
<tr><td class="c0"><div class="ic"><svg width="16" height="16" viewBox="0 0 16 16" style="left:3px"><path d="M11.46 8.52 L12.62 9.11 L12.05 10.48 L10.82 10.08 L10.08 10.82 L10.48 12.05 L9.11 12.62 L8.52 11.46 L7.48 11.46 L6.89 12.62 L5.52 12.05 L5.92 10.82 L5.18 10.08 L3.95 10.48 L3.38 9.11 L4.54 8.52 L4.54 7.48 L3.38 6.89 L3.95 5.52 L5.18 5.92 L5.92 5.18 L5.52 3.95 L6.89 3.38 L7.48 4.54 L8.52 4.54 L9.11 3.38 L10.48 3.95 L10.08 5.18 L10.82 5.92 L12.05 5.52 L12.62 6.89 L11.46 7.48Z" fill="#7fae2c" stroke="#7fae2c" stroke-width="0.7" stroke-linejoin="round"/><circle cx="8" cy="8" r="2.0" fill="#b6dc6a"/><circle cx="8" cy="8" r="1.25" fill="#ffffff"/></svg><svg width="16" height="16" viewBox="0 0 16 16" style="left:21px"><path d="M0.3 1.5 L2.4 2.5 L3.1 3.6" fill="none" stroke="#4a72ab" stroke-width="1.3" stroke-linecap="round"/><path d="M2.7 3.2 H15.9 L13 8.8 H3.3 Z" fill="#5b83bb"/><path d="M2.7 3.7 H15.6" stroke="#4a72ab" stroke-width="1"/><rect x="4.6" y="4.1" width="1.1" height="1.5" fill="#fff"/><rect x="6.6" y="4.1" width="1.1" height="1.5" fill="#fff"/><rect x="8.6" y="4.1" width="1.1" height="1.5" fill="#fff"/><rect x="10.6" y="4.1" width="1.1" height="1.5" fill="#fff"/><rect x="12.6" y="4.1" width="1.1" height="1.5" fill="#fff"/><rect x="5.0" y="6.2" width="1.1" height="1.5" fill="#fff"/><rect x="7.0" y="6.2" width="1.1" height="1.5" fill="#fff"/><rect x="9.0" y="6.2" width="1.1" height="1.5" fill="#fff"/><rect x="11.0" y="6.2" width="1.1" height="1.5" fill="#fff"/><path d="M3.2 3.4 L3.8 12.1" stroke="#4a72ab" stroke-width="1.5" fill="none"/><path d="M3.6 12.05 H14.8" stroke="#4a72ab" stroke-width="1.3" fill="none"/><path d="M3.8 12.2 H7.5" stroke="#3f97e6" stroke-width="0.9" fill="none"/><circle cx="5" cy="13.6" r="1.05" fill="#2a8be2"/><circle cx="13" cy="13.6" r="1.05" fill="#2a8be2"/></svg><svg width="16" height="16" viewBox="0 0 16 16" style="left:39px"><radialGradient id="g15" cx="0.42" cy="0.42" r="0.62"><stop offset="0" stop-color="#f0f5fa"/><stop offset="0.5" stop-color="#dbe8f5"/><stop offset="0.8" stop-color="#b4d1ee"/><stop offset="1" stop-color="#8ebce8"/></radialGradient><circle cx="8" cy="8" r="7" fill="url(#g15)"/><text opacity=".99" x="8.05" y="12.25" text-anchor="middle" font-family="Liberation Sans, sans-serif" font-weight="bold" font-size="11.4" fill="#3566a8" stroke="#3566a8" stroke-width="0.1">i</text></svg></div></td><td class="c0"><div class="ic"><svg width="18" height="16" viewBox="0 0 18 16" style="left:3px;top:0"><path d="M8 1.5 C11.8 1.5 14.5 3.5 14.5 6 C14.5 8.6 11.6 10.2 9.2 10.4 L5.2 14.6 L5.4 10 C3 9.4 1.5 7.8 1.5 6 C1.5 3.5 4.2 1.5 8 1.5 Z" fill="#fff" stroke="#332c1c" stroke-width="1.05" stroke-linejoin="round"/><text opacity=".99" x="8" y="9.2" text-anchor="middle" font-family="Liberation Sans, sans-serif" font-weight="bold" font-size="10" fill="#1a1a1a" stroke="#1a1a1a" stroke-width="0.25">!</text></svg></div></td><td>9</td><td><span class="t" style="transform:scaleX(0.942)">CH12830</span></td><td>4</td><td><span class="t" style="transform:scaleX(0.942)">CH12830</span></td><td><span class="t" style="transform:scaleX(0.895)">HOSE CLIP</span></td><td></td><td></td><td></td></tr>
</tbody>
</table>
</div>
<svg id="logo" width="44" height="52" viewBox="1026 522 44 52" style="position:absolute;left:1026px;top:522px;will-change:transform">
<g fill="none" stroke="#1a5ca6" stroke-width="3.2">
<circle cx="1038.9" cy="534.2" r="6.75"/><circle cx="1055.1" cy="534.2" r="6.75"/><circle cx="1038.9" cy="550.5" r="6.75"/><circle cx="1055.1" cy="550.5" r="6.75"/>
<path d="M1033.9 539.2 L1043.9 529.2 M1050.1 529.2 L1060.1 539.2 M1033.9 545.5 L1043.9 555.5 M1050.1 555.5 L1060.1 545.5" stroke-width="3.2"/>
</g>
<g fill="#1a5ca6">
<path d="M1047 525.6 L1049.6 531 L1047 534.4 L1044.4 531 Z"/>
<path d="M1047 559.2 L1049.6 553.8 L1047 550.4 L1044.4 553.8 Z"/>
<path d="M1030.2 542.35 L1035.6 539.8 L1039 542.35 L1035.6 544.9 Z"/>
<path d="M1063.8 542.35 L1058.4 539.8 L1055 542.35 L1058.4 544.9 Z"/>
</g>
<text x="1029.2" y="570.3" font-family="Liberation Sans, sans-serif" font-weight="bold" font-size="9.6" fill="#1a5ca6" stroke="#1a5ca6" stroke-width="0.25" textLength="34.6" lengthAdjust="spacingAndGlyphs">Perkins</text>
<text x="1064" y="565.6" font-family="Liberation Sans, sans-serif" font-size="2.6" fill="#1a5ca6">®</text>
</svg>

</body>
</html>
